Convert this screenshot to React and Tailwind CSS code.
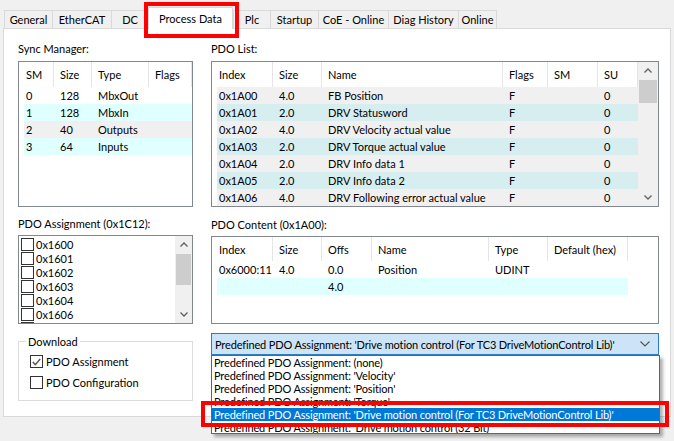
import React from "react";

const tabs = [
  { label: "General", w: 48 },
  { label: "EtherCAT", w: 59 },
  { label: "DC", w: 37 },
  { label: "Process Data", w: 85, active: true },
  { label: "Plc", w: 37 },
  { label: "Startup", w: 48 },
  { label: "CoE - Online", w: 70 },
  { label: "Diag History", w: 70 },
  { label: "Online", w: 39 },
];

const syncCols = [30, 38, 57, 43];
const syncRows = [
  { c: ["0", "128", "MbxOut", ""], bg: "bg-white" },
  { c: ["1", "128", "MbxIn", ""], bg: "bg-[#e0ffff]" },
  { c: ["2", "40", "Outputs", ""], bg: "bg-[#f0f0f0]" },
  { c: ["3", "64", "Inputs", ""], bg: "bg-[#e0ffff]" },
];

const pdoCols = [56, 49, 181, 45, 50, 40];
const pdoRows = [
  ["0x1A00", "4.0", "FB Position", "F", "", "0"],
  ["0x1A01", "2.0", "DRV Statusword", "F", "", "0"],
  ["0x1A02", "4.0", "DRV Velocity actual value", "F", "", "0"],
  ["0x1A03", "2.0", "DRV Torque actual value", "F", "", "0"],
  ["0x1A04", "2.0", "DRV Info data 1", "F", "", "0"],
  ["0x1A05", "2.0", "DRV Info data 2", "F", "", "0"],
  ["0x1A06", "4.0", "DRV Following error actual value", "F", "", "0"],
];

const contentCols = [56, 49, 50, 117, 59, 80];

// last entry only peeks out under the bottom border
const assignItems = ["0x1600", "0x1601", "0x1602", "0x1603", "0x1604", "0x1606", ""];

const options = [
  "Predefined PDO Assignment: (none)",
  "Predefined PDO Assignment: 'Velocity'",
  "Predefined PDO Assignment: 'Position'",
  "Predefined PDO Assignment: 'Torque'",
  "Predefined PDO Assignment: 'Drive motion control (For TC3 DriveMotionControl Lib)'",
  "Predefined PDO Assignment: 'Drive motion control (32 Bit)'",
];

const Chevron = ({ up, className }) => (
  <svg width="8" height="5" viewBox="0 0 8 5" className={className}>
    <polyline
      points={up ? "0.5,4.5 4,1 7.5,4.5" : "0.5,0.5 4,4 7.5,0.5"}
      fill="none"
      stroke="#606060"
      strokeWidth="1.3"
    />
  </svg>
);

const Scrollbar = ({ thumbTop, thumbH, w }) => (
  <div className={`flex flex-col h-full bg-[#f0f0f0] ${w}`}>
    <div className="h-[17px] flex items-center justify-center shrink-0">
      <Chevron up />
    </div>
    <div className="flex-1 relative">
      <div className="absolute left-[1px] right-[1px] bg-[#cdcdcd]" style={{ top: thumbTop, height: thumbH }} />
    </div>
    <div className="h-[17px] flex items-center justify-center shrink-0">
      <Chevron />
    </div>
  </div>
);

const CheckBox = ({ checked }) => (
  <div className="w-[13px] h-[13px] border border-[#333333] bg-white flex items-center justify-center shrink-0">
    {checked && (
      <svg width="9" height="8" viewBox="0 0 9 8">
        <polyline points="0.8,4 3.3,6.6 8.2,1" fill="none" stroke="#555555" strokeWidth="1.4" />
      </svg>
    )}
  </div>
);

const HeaderRow = ({ cols, labels, h }) => (
  <div className={`flex ml-[5px] ${h} bg-white`}>
    {cols.map((w, i) => (
      <div
        key={i}
        style={{ width: w }}
        className={`flex items-center shrink-0 border-r border-[#e5e5e5] ${i === 0 ? "pl-[2px]" : "pl-[6px]"}`}
      >
        {labels[i]}
      </div>
    ))}
  </div>
);

const DataRow = ({ cols, cells, bg }) => (
  <div className={`flex ml-[5px] h-[17px] ${bg}`}>
    {cols.map((w, i) => (
      <div
        key={i}
        style={{ width: w }}
        className={`flex items-center shrink-0 whitespace-nowrap ${i === 0 ? "pl-[2px]" : "pl-[6px]"}`}
      >
        {cells[i]}
      </div>
    ))}
  </div>
);

export default function App() {
  return (
    <div className="w-[674px] h-[441px] bg-[#f0f0f0] relative overflow-hidden text-[11px] leading-[15px] text-black font-['Lato',sans-serif]">
      {/* Tabs */}
      <div className="flex items-end pl-[4px] pt-[7px] -mb-px relative z-10">
        {tabs.map((t) => (
          <div
            key={t.label}
            style={{ width: t.w }}
            className={
              t.active
                ? "h-[22px] bg-white border border-b-0 border-[#d9d9d9] flex items-center justify-center shrink-0"
                : "h-[18px] mb-px bg-[#f0f0f0] border border-b-0 border-r-0 border-[#d9d9d9] last:border-r flex items-center justify-center shrink-0"
            }
          >
            {t.label}
          </div>
        ))}
      </div>

      {/* Tab page */}
      <div className="ml-[3px] w-[668px] h-[389px] bg-white border border-[#d9d9d9] pl-[14px] pt-[12px] flex gap-[18px]">
        {/* Left column */}
        <div className="w-[175px] flex flex-col">
          <div>Sync Manager:</div>
          <div className="mt-[5px] h-[146px] border border-[#828790] bg-white">
            <HeaderRow cols={syncCols} labels={["SM", "Size", "Type", "Flags"]} h="h-[25px]" />
            {syncRows.map((r, i) => (
              <DataRow key={i} cols={syncCols} cells={r.c} bg={r.bg} />
            ))}
          </div>

          <div className="mt-[9px]">PDO Assignment (0x1C12):</div>
          <div className="mt-[4px] h-[89px] border border-[#828790] bg-white flex overflow-hidden">
            <div className="flex-1 pt-[1px] pl-[2px] overflow-hidden">
              {assignItems.map((a, i) => (
                <div key={i} className="h-[14px] flex items-center gap-[2px]">
                  <CheckBox />
                  {a && <span>{a}</span>}
                </div>
              ))}
            </div>
            <Scrollbar thumbTop={1} thumbH={31} w="w-[17px]" />
          </div>

          <div className="mt-[17px] h-[60px] border border-[#dcdcdc] relative pl-[11px] pt-[13px]">
            <div className="absolute -top-[8px] left-[7px] px-[2px] bg-white">Download</div>
            <div className="flex items-center gap-[3px] h-[13px]">
              <CheckBox checked />
              <span>PDO Assignment</span>
            </div>
            <div className="flex items-center gap-[3px] h-[13px] mt-[8px]">
              <CheckBox />
              <span>PDO Configuration</span>
            </div>
          </div>
        </div>

        {/* Right column */}
        <div className="w-[448px] flex flex-col">
          <div>PDO List:</div>
          <div className="mt-[5px] h-[146px] border border-[#828790] bg-white flex overflow-hidden">
            <div className="w-[426px]">
              <HeaderRow
                cols={pdoCols}
                labels={["Index", "Size", "Name", "Flags", "SM", "SU"]}
                h="h-[25px]"
              />
              {pdoRows.map((r, i) => (
                <DataRow
                  key={i}
                  cols={pdoCols}
                  cells={r}
                  bg={i % 2 === 0 ? "bg-[#f0f0f0]" : "bg-[#d6eef0]"}
                />
              ))}
            </div>
            <Scrollbar thumbTop={1} thumbH={23} w="w-[20px]" />
          </div>

          <div className="mt-[10px]">PDO Content (0x1A00):</div>
          <div className="mt-[4px] h-[88px] border border-[#828790] bg-white">
            <HeaderRow
              cols={contentCols}
              labels={["Index", "Size", "Offs", "Name", "Type", "Default (hex)"]}
              h="h-[24px]"
            />
            <DataRow cols={contentCols} cells={["0x6000:11", "4.0", "0.0", "Position", "UDINT", ""]} bg="bg-white" />
            <DataRow cols={contentCols} cells={["", "", "4.0", "", "", ""]} bg="bg-[#e0ffff] w-[411px]" />
          </div>

          <div className="mt-[9px] h-[22px] border border-[#2d7dbf] bg-[#cce4f7] flex items-center pl-[3px] pr-[8px] justify-between">
            <span className="whitespace-nowrap tracking-[-0.15px]">
              Predefined PDO Assignment: 'Drive motion control (For TC3 DriveMotionControl Lib)'
            </span>
            <svg width="10" height="6" viewBox="0 0 10 6">
              <polyline points="0.5,0.5 5,5 9.5,0.5" fill="none" stroke="#505050" strokeWidth="1.1" />
            </svg>
          </div>
        </div>
      </div>

      {/* Dropdown list popup */}
      <div className="absolute left-[211px] top-[355px] w-[449px] h-[79px] border border-[#646464] bg-white overflow-hidden shadow-[3px_3px_3px_rgba(0,0,0,0.3)]">
        {options.map((o, i) => (
          <div
            key={o}
            className={`h-[13px] leading-[13px] pl-[2px] whitespace-nowrap tracking-[-0.15px] ${i === 4 ? "bg-[#0078d7] text-white" : ""}`}
          >
            {o}
          </div>
        ))}
      </div>

      {/* Red annotation boxes */}
      <div className="absolute left-[144px] top-[2px] w-[95px] h-[36px] border-[4px] border-[#ff0000] z-20" />
      <div className="absolute left-[201px] top-[401px] w-[468px] h-[26px] border-[4px] border-[#ff0000] z-20" />
    </div>
  );
}
